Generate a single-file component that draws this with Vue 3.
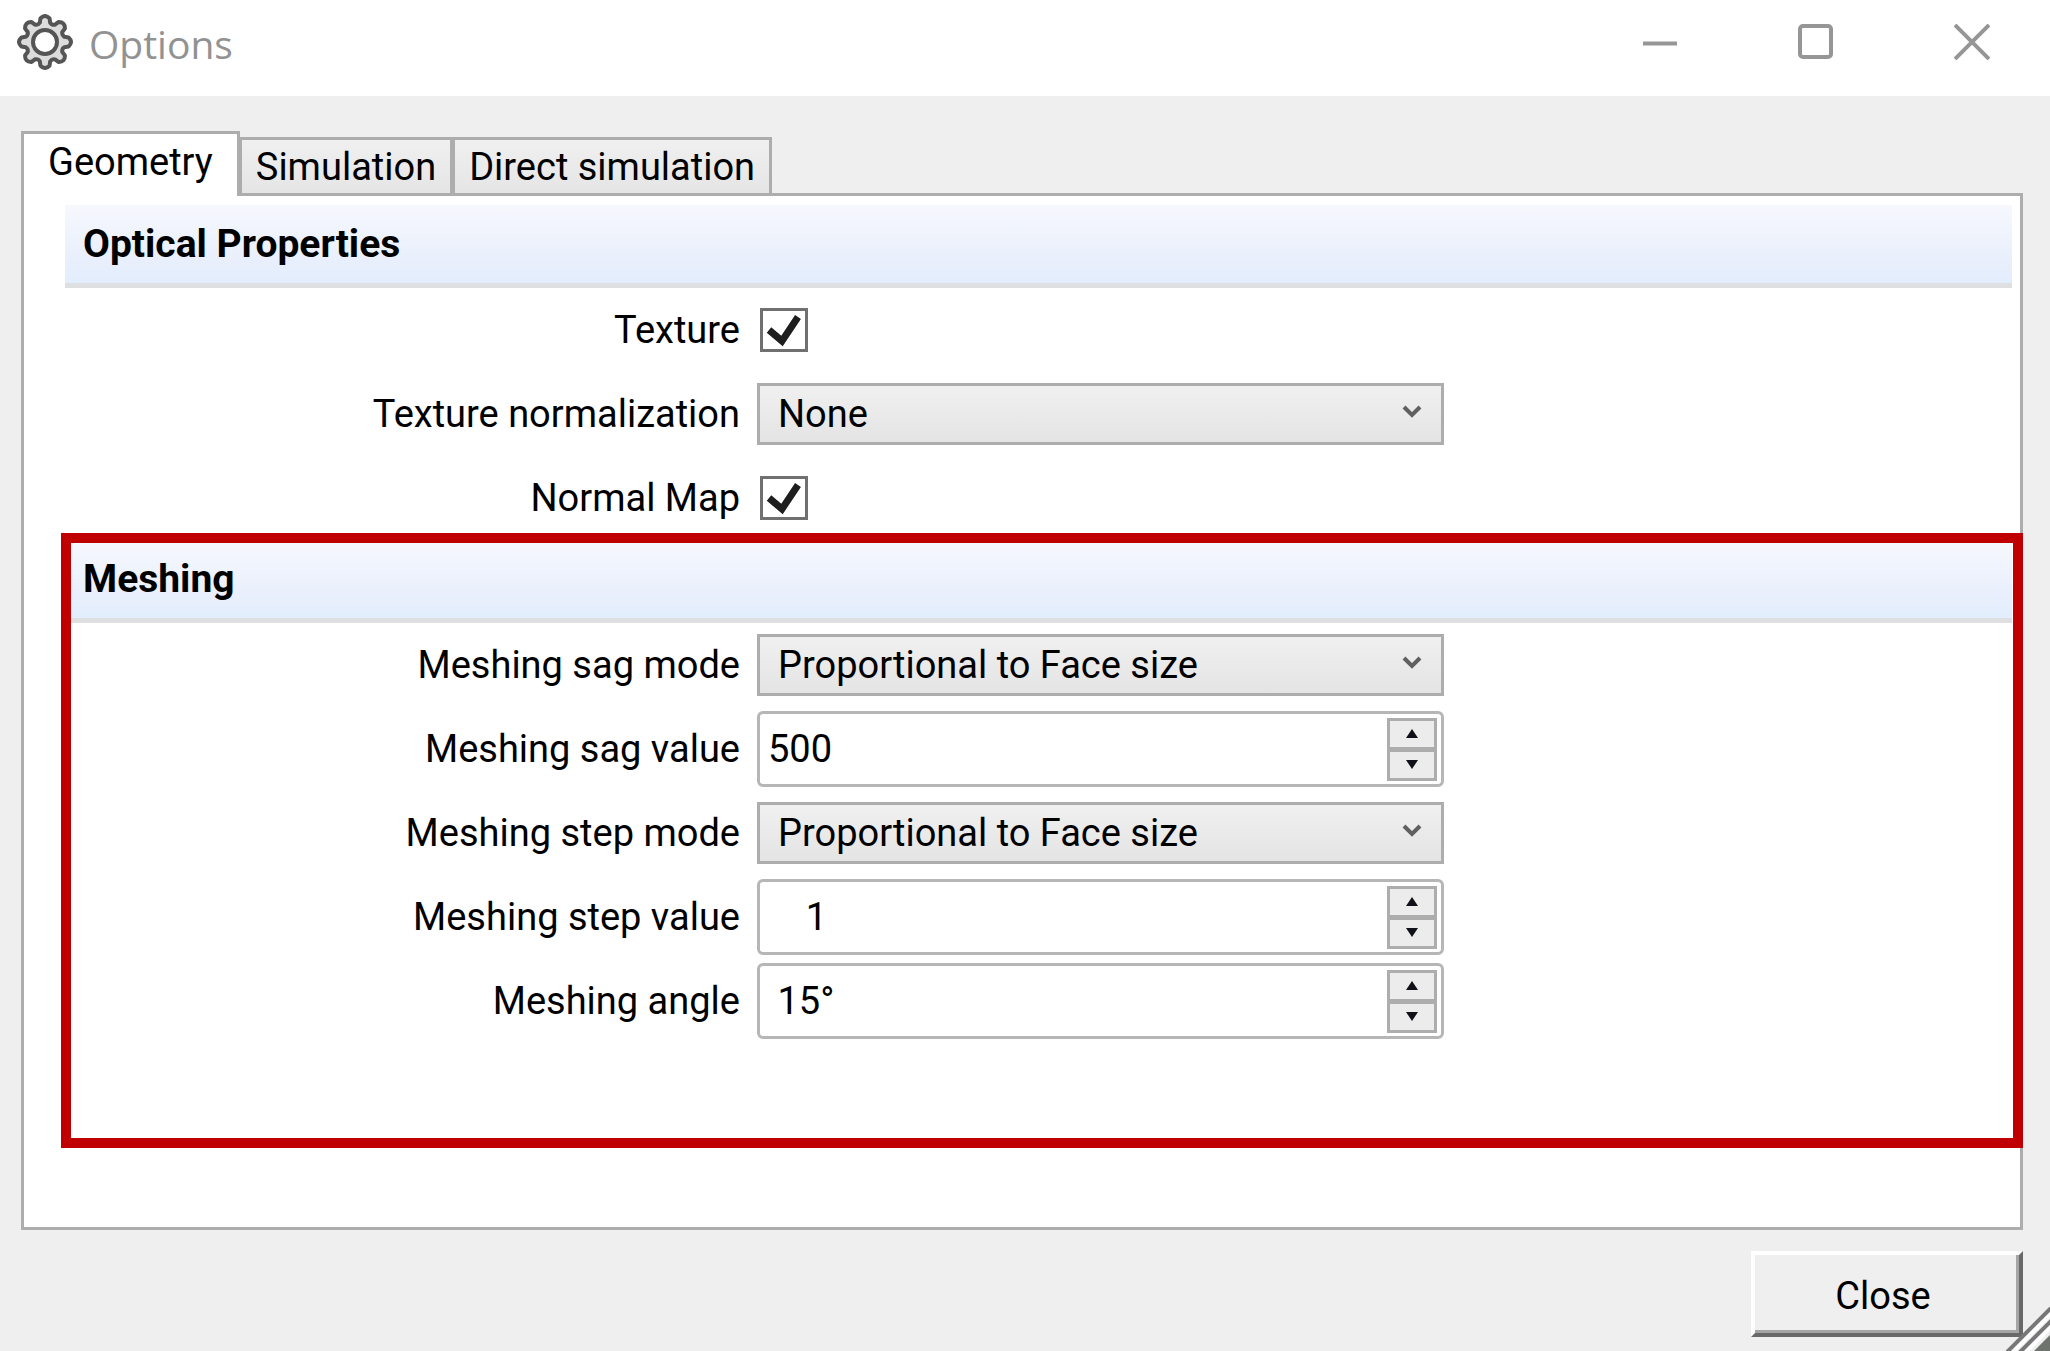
<template>
  <div class="window">
    <header class="titlebar">
      <svg class="gear" viewBox="-28 -28 56 56" aria-hidden="true">
        <path :d="gearPath" />
        <circle r="12" />
      </svg>
      <h1>Options</h1>
      <div class="window-buttons">
        <button type="button" aria-label="Minimize">
          <svg viewBox="0 0 36 36"><path d="M1 19.5h34" /></svg>
        </button>
        <button type="button" aria-label="Maximize">
          <svg viewBox="0 0 36 36">
            <rect x="2" y="2" width="31" height="31" rx="3" />
          </svg>
        </button>
        <button type="button" aria-label="Close window">
          <svg viewBox="0 0 36 36"><path d="M1 1l34 34M35 1L1 35" /></svg>
        </button>
      </div>
    </header>

    <main>
      <div class="tabs" role="tablist">
        <button
          v-for="tab in tabs"
          :key="tab"
          type="button"
          role="tab"
          class="tab"
          :class="{ active: tab === activeTab }"
          :aria-selected="tab === activeTab"
          @click="activeTab = tab"
        >
          {{ tab }}
        </button>
      </div>

      <div class="panel" role="tabpanel">
        <section
          v-for="section in sections"
          :key="section.title"
          class="section"
          :class="{ highlighted: section.highlighted }"
        >
          <h2>{{ section.title }}</h2>
          <div v-for="field in section.fields" :key="field.id" class="row">
            <label :for="field.id">{{ field.label }}</label>

            <div v-if="field.type === 'check'" class="check">
              <input :id="field.id" v-model="field.value" type="checkbox" />
              <svg v-if="field.value" viewBox="0 0 48 44" aria-hidden="true">
                <path d="M9 22l13 11L38 9" />
              </svg>
            </div>

            <div v-else-if="field.type === 'select'" class="combo">
              <select :id="field.id" v-model="field.value">
                <option>{{ field.value }}</option>
              </select>
              <svg viewBox="0 0 20 14" aria-hidden="true">
                <path d="M2 2l8 8 8-8" />
              </svg>
            </div>

            <div v-else class="spin">
              <input :id="field.id" v-model="field.value" type="text" />
              <div class="spin-buttons">
                <button type="button" :aria-label="'Increase ' + field.label">
                  <svg viewBox="0 0 12 9"><path d="M6 0l6 9H0z" /></svg>
                </button>
                <button type="button" :aria-label="'Decrease ' + field.label">
                  <svg viewBox="0 0 12 9"><path d="M0 0h12L6 9z" /></svg>
                </button>
              </div>
            </div>
          </div>
        </section>
      </div>
    </main>

    <footer>
      <button type="button" class="close">Close</button>
    </footer>

    <svg class="grip" viewBox="0 0 44 44" aria-hidden="true">
      <path class="grip-back" d="M0 44L44 0v44z" />
      <path class="grip-light" d="M6 46L46 6M19 46L46 19" />
      <path class="grip-dark" d="M1 45L45 1M13 46L46 13" />
      <path class="grip-corner" d="M28 44L44 28v16z" />
    </svg>
  </div>
</template>

<script setup>
import { reactive, ref } from "vue";

const tabs = ["Geometry", "Simulation", "Direct simulation"];
const activeTab = ref("Geometry");

const sections = reactive([
  {
    title: "Optical Properties",
    fields: [
      { id: "texture", label: "Texture", type: "check", value: true },
      {
        id: "texture-normalization",
        label: "Texture normalization",
        type: "select",
        value: "None",
      },
      { id: "normal-map", label: "Normal Map", type: "check", value: true },
    ],
  },
  {
    title: "Meshing",
    highlighted: true,
    fields: [
      {
        id: "sag-mode",
        label: "Meshing sag mode",
        type: "select",
        value: "Proportional to Face size",
      },
      { id: "sag-value", label: "Meshing sag value", type: "spin", value: "500" },
      {
        id: "step-mode",
        label: "Meshing step mode",
        type: "select",
        value: "Proportional to Face size",
      },
      { id: "step-value", label: "Meshing step value", type: "spin", value: "    1" },
      { id: "angle", label: "Meshing angle", type: "spin", value: " 15°" },
    ],
  },
]);

// eight rounded teeth, one every 45 degrees
const polar = (radius, degrees) => {
  const a = (degrees * Math.PI) / 180;
  return `${(radius * Math.cos(a)).toFixed(2)} ${(radius * Math.sin(a)).toFixed(2)}`;
};
const gearPath =
  Array.from({ length: 8 }, (_, i) => {
    const a = i * 45;
    return [
      `${i ? "L" : "M"}${polar(20, a - 15)}`,
      `L${polar(24, a - 11)}`,
      `Q${polar(28.5, a)} ${polar(24, a + 11)}`,
      `L${polar(20, a + 15)}`,
      `Q${polar(18, a + 22)} ${polar(20, a + 30)}`,
    ].join("");
  }).join("") + "Z";
</script>

<style>
body {
  margin: 0;
}
</style>

<style scoped>
.window {
  position: relative;
  display: flex;
  flex-direction: column;
  box-sizing: border-box;
  min-height: 100vh;
  background: #efefef;
  color: #000;
  font-family: Roboto, "Liberation Sans", sans-serif;
  font-size: 38px;
  line-height: 48px;
}

button,
input,
select {
  box-sizing: border-box;
  margin: 0;
  padding: 0;
  border: 0;
  border-radius: 0;
  background: none;
  color: inherit;
  font: inherit;
}

svg {
  display: block;
  fill: none;
}

.titlebar {
  display: flex;
  align-items: center;
  box-sizing: border-box;
  height: 96px;
  padding: 0 0 12px 17px;
  background: #fff;
}

.gear {
  width: 56px;
  height: 56px;
  stroke: #555;
  stroke-width: 4;
  stroke-linejoin: round;
}

.gear path {
  fill: #dcdcdc;
}

.gear circle {
  fill: #fff;
}

h1 {
  margin: 4px 0 0 16px;
  color: #929292;
  font-family: "Open Sans", "Noto Sans", sans-serif;
  font-size: 39px;
  font-weight: 400;
}

.window-buttons {
  display: flex;
  margin-left: auto;
}

.window-buttons button {
  display: flex;
  align-items: center;
  justify-content: center;
  width: 156px;
  height: 84px;
}

.window-buttons svg {
  width: 36px;
  height: 36px;
  stroke: #969696;
  stroke-width: 4;
}

main {
  display: flex;
  flex: 1;
  flex-direction: column;
  padding: 35px 27px 0 21px;
}

.tabs {
  display: flex;
  align-items: flex-end;
  /* tabs sit on the panel's top border */
  margin-bottom: -3px;
}

.tab {
  height: 59px;
  padding: 0 14px;
  border: 3px solid #adadad;
  border-left-width: 2px;
  background: linear-gradient(#f0f0f0, #e5e5e5);
}

.tab.active {
  z-index: 1;
  height: 65px;
  padding: 0 24px 6px;
  border-bottom: 0;
  border-left-width: 3px;
  background: #fff;
}

.panel {
  flex: 1;
  padding: 9px 8px 80px 41px;
  border: 3px solid #adadad;
  background: #fff;
}

.section {
  position: relative;
}

.highlighted {
  padding-bottom: 95px;
}

.highlighted::after {
  position: absolute;
  inset: -7px -11px -10px -4px;
  border: 10px solid #c00000;
  content: "";
  pointer-events: none;
}

h2 {
  box-sizing: border-box;
  height: 83px;
  margin: 0;
  padding: 15px 18px 0;
  border-bottom: 5px solid #dedfe0;
  background: linear-gradient(#f6f8fd, #e9effc 70%, #e2eefd);
  font-size: 39px;
  font-weight: 700;
}

.row {
  display: grid;
  grid-template-columns: 675px 687px;
  gap: 17px;
  align-items: center;
  height: 84px;
}

label {
  text-align: right;
}

.check {
  position: relative;
  width: 48px;
  height: 44px;
  margin-left: 3px;
}

.check input {
  display: block;
  width: 48px;
  height: 44px;
  border: 3px solid #707070;
  background: #fff;
  appearance: none;
}

.check svg {
  position: absolute;
  inset: 0;
  stroke: #1e1e1e;
  stroke-width: 7;
  pointer-events: none;
}

.combo {
  position: relative;
}

.combo select {
  display: block;
  width: 100%;
  height: 62px;
  padding: 0 60px 0 18px;
  border: 3px solid #adadad;
  background: linear-gradient(#f0f0f0, #e4e4e4);
  appearance: none;
}

.combo svg {
  position: absolute;
  top: 22px;
  right: 22px;
  width: 20px;
  height: 14px;
  stroke: #606060;
  stroke-width: 4;
  pointer-events: none;
}

.spin {
  display: flex;
  align-items: center;
  box-sizing: border-box;
  height: 76px;
  padding: 0 4px 0 8px;
  border: 3px solid #b6b6b6;
  border-radius: 6px;
  background: #fff;
}

.spin input {
  flex: 1;
  min-width: 0;
  height: 60px;
}

.spin-buttons {
  box-sizing: border-box;
  width: 50px;
  border: 3px solid #adadad;
}

.spin-buttons button {
  display: flex;
  align-items: center;
  justify-content: center;
  width: 100%;
  height: 26px;
  background: #ececec;
}

.spin-buttons button + button {
  height: 31px;
  border-top: 5px solid #adadad;
}

.spin-buttons svg {
  width: 12px;
  height: 9px;
  fill: #101018;
}

footer {
  display: flex;
  justify-content: flex-end;
  padding: 21px 27px 14px;
}

.close {
  width: 272px;
  height: 86px;
  padding: 4px 8px 0 0;
  border: 4px solid;
  border-color: #fff #696969 #696969 #fff;
  box-shadow: inset -3px -3px #a5a5a5;
}

.grip {
  position: absolute;
  right: 0;
  bottom: 0;
  width: 44px;
  height: 44px;
}

.grip-back {
  fill: #efefef;
}

.grip-light {
  stroke: #fff;
  stroke-width: 4;
}

.grip-dark {
  stroke: #777;
  stroke-width: 4;
}

.grip-corner {
  fill: #6e736e;
}
</style>
